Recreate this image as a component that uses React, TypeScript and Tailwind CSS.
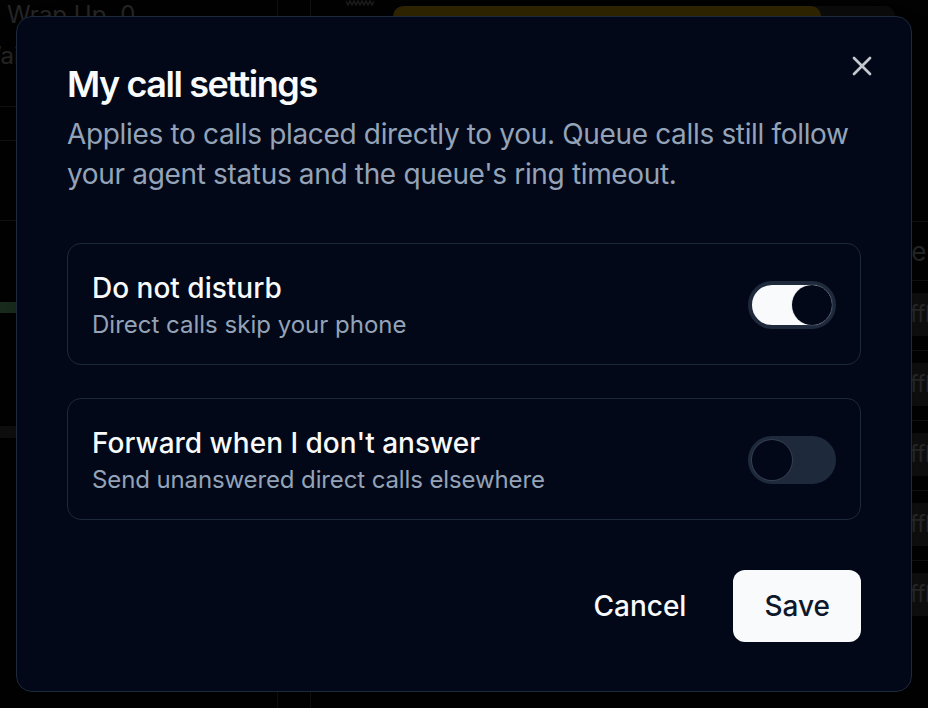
import React, { useState } from 'react';
import { X } from 'lucide-react';

interface ToggleProps {
  on: boolean;
  onChange: (v: boolean) => void;
}

const Toggle: React.FC<ToggleProps> = ({ on, onChange }) => (
  <button
    role="switch"
    aria-checked={on}
    onClick={() => onChange(!on)}
    className={`flex h-[48px] w-[88px] shrink-0 items-center rounded-full border-4 border-[#1e293b] transition-colors ${
      on ? 'bg-[#f8fafc]' : 'bg-[#1e293b]'
    }`}
  >
    <span
      className={`block h-[40px] w-[40px] rounded-full bg-[#020817] shadow-[0_0_0_1px_rgba(148,163,184,0.18)] transition-transform ${
        on ? 'translate-x-[40px]' : 'translate-x-0'
      }`}
    />
  </button>
);

const rows = [0, 1, 2, 3, 4];

export default function App() {
  const [dnd, setDnd] = useState(true);
  const [forward, setForward] = useState(false);

  return (
    <div className="relative h-[708px] w-[928px] overflow-hidden bg-[#0a0a0a] [font-family:Inter,'Noto_Sans',sans-serif]">
      {/* page behind the dialog */}
      <div className="flex h-full">
        <aside className="flex w-[278px] shrink-0 flex-col overflow-hidden border-r border-[#555]">
          <div className="flex h-[40px] gap-[14px] pl-[7px] pt-[3px] text-[24px] leading-none text-[#b8b8b8]">
            <span>Wrap Up</span>
            <span>0</span>
          </div>
          <div className="h-[67px] border-b border-[#555] pt-[4px] text-[24px] leading-none text-[#b8b8b8]">
            <span className="-ml-[22px]">Waiting</span>
          </div>
          <div className="h-[34px] border-b border-[#555]" />
          <div className="h-[80px] border-b border-[#555]" />
          <div className="mt-[81px] h-[11px] w-[200px] bg-[#7fd98c]" />
          <div className="mt-[113px] h-[12px] w-[220px] bg-[#464646]" />
        </aside>
        <div className="w-[33px] shrink-0 border-r border-[#555]" />
        <main className="flex min-w-0 flex-1 flex-col overflow-hidden">
          <div className="flex h-[221px] items-start">
            <svg width="28" height="6" viewBox="0 0 28 6" className="ml-[35px]" fill="none" stroke="#8a8a8a" strokeWidth="1.5">
              <polyline points="0,1 2,5 4,1 6,5 8,1 10,5 12,1 14,5 16,1 18,5 20,1 22,5 24,1 26,5 28,1" />
            </svg>
            <div className="ml-[19px] mr-[33px] mt-[6px] flex h-[22px] flex-1 overflow-hidden rounded-[10px] bg-[#383838]">
              <div className="h-full w-[428px] rounded-[10px] bg-[#eab308]" />
            </div>
          </div>
          <div className="w-[720px] border-t border-[#555]">
            <div className="flex h-[58px] items-center text-[26px] text-[#b8b8b8]">
              <div className="w-[552px]" />
              <span>State</span>
            </div>
            {rows.map((r) => (
              <div key={r} className="flex h-[70px] items-start border-t border-[#555] pt-[12px]">
                <div className="w-[574px]" />
                <span className="flex h-[43px] items-center rounded-[8px] bg-[#464646] px-[8px] text-[23px] tracking-tight text-[#c0c0c0]">
                  Offline
                </span>
              </div>
            ))}
          </div>
        </main>
      </div>

      {/* overlay + dialog */}
      <div className="absolute inset-0 flex items-center justify-center bg-black/80">
        <div
          role="dialog"
          className="relative flex w-[896px] flex-col rounded-[16px] border border-[#1e293b] bg-[#020817] px-[50px] py-[49px] shadow-2xl"
        >
          <button className="absolute right-[33px] top-[33px] text-[#c4c7cd]">
            <X className="h-[32px] w-[32px]" strokeWidth={2} />
          </button>

          <h2 className="text-[36px] font-semibold leading-none tracking-[-0.04em] text-[#f8fafc]">My call settings</h2>
          <p className="mt-[12px] text-[28px] leading-[40px] tracking-[-0.012em] text-[#94a3b8]">
            Applies to calls placed directly to you. Queue calls still follow your agent status and the queue's ring
            timeout.
          </p>

          <div className="mt-[49px] flex flex-col gap-[33px]">
            <div className="flex items-center justify-between rounded-[14px] border border-[#1e293b] px-[24px] pb-[23px] pt-[24px]">
              <div className="flex flex-col">
                <span className="text-[28px] font-medium leading-[40px] text-[#f8fafc]">Do not disturb</span>
                <span className="mt-[1px] text-[24px] leading-[32px] text-[#94a3b8]">Direct calls skip your phone</span>
              </div>
              <Toggle on={dnd} onChange={setDnd} />
            </div>
            <div className="flex items-center justify-between rounded-[14px] border border-[#1e293b] px-[24px] pb-[23px] pt-[24px]">
              <div className="flex flex-col">
                <span className="text-[28px] font-medium leading-[40px] text-[#f8fafc]">Forward when I don't answer</span>
                <span className="mt-[1px] text-[24px] leading-[32px] tracking-[-0.005em] text-[#94a3b8]">
                  Send unanswered direct calls elsewhere
                </span>
              </div>
              <Toggle on={forward} onChange={setForward} />
            </div>
          </div>

          <div className="mt-[50px] flex justify-end gap-[16px]">
            <button className="h-[72px] rounded-[12px] px-[31px] text-[28px] font-medium text-[#f8fafc] hover:bg-[#1e293b]">
              Cancel
            </button>
            <button className="h-[72px] rounded-[12px] bg-[#f8fafc] px-[31px] text-[28px] font-medium text-[#0f172a]">
              Save
            </button>
          </div>
        </div>
      </div>
    </div>
  );
}
